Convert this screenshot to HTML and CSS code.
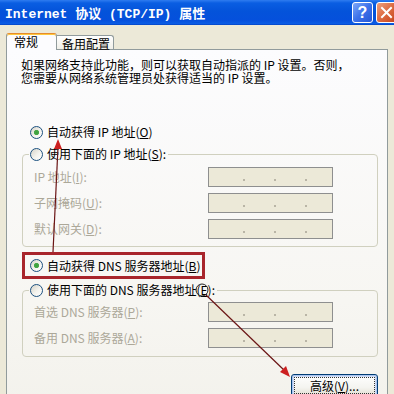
FILE: index.html
```html
<!DOCTYPE html>
<html lang="zh-CN">
<head>
<meta charset="utf-8">
<title>Internet 协议 (TCP/IP) 属性</title>
<link rel="stylesheet" href="styles.css">
</head>
<body>
<div class="window">
  <div class="titlebar">
    <span class="title">Internet 协议 (TCP/IP) 属性</span>
    <div class="caption-btns">
      <span class="cbtn help">?</span>
      <span class="cbtn close"><svg width="19" height="19" viewBox="0 0 19 19"><path d="M5 5 L14 14 M14 5 L5 14" stroke="#fff" stroke-width="2" stroke-linecap="square"/></svg></span>
    </div>
  </div>
  <div class="tabs">
    <div class="tab active">常规</div>
    <div class="tab">备用配置</div>
  </div>
  <div class="panel">
    <p class="desc">如果网络支持此功能，则可以获取自动指派的 IP 设置。否则，<br>您需要从网络系统管理员处获得适当的 IP 设置。</p>
    <div class="radio first"><span class="dot checked"></span><span>自动获得 IP 地址(<u>O</u>)</span></div>
    <fieldset class="group g-ip">
      <legend><div class="radio"><span class="dot"></span><span>使用下面的 IP 地址(<u>S</u>):</span></div></legend>
      <div class="rows">
        <span class="lbl">IP 地址(<u>I</u>):</span><span class="ip"><i></i><i></i><i></i></span>
        <span class="lbl">子网掩码(<u>U</u>):</span><span class="ip"><i></i><i></i><i></i></span>
        <span class="lbl">默认网关(<u>D</u>):</span><span class="ip"><i></i><i></i><i></i></span>
      </div>
    </fieldset>
    <div class="highlight"><div class="radio"><span class="dot checked"></span><span>自动获得 DNS 服务器地址(<u>B</u>)</span></div></div>
    <fieldset class="group g-dns">
      <legend><div class="radio"><span class="dot"></span><span>使用下面的 DNS 服务器地址(<u>E</u>):</span></div></legend>
      <div class="rows">
        <span class="lbl">首选 DNS 服务器(<u>P</u>):</span><span class="ip"><i></i><i></i><i></i></span>
        <span class="lbl">备用 DNS 服务器(<u>A</u>):</span><span class="ip"><i></i><i></i><i></i></span>
      </div>
    </fieldset>
    <div class="actions"><button class="btn">高级(<u>V</u>)...</button></div>
  </div>
  <svg class="annot" width="394" height="394" viewBox="0 0 394 394">
    <line x1="53" y1="252" x2="58" y2="147" stroke="#6b1515" stroke-width="1.2"/>
    <polygon points="58,139 54,149 62,149" fill="#cc2020"/>
    <circle cx="202" cy="290" r="6" fill="none" stroke="#222" stroke-width="1"/>
    <line x1="206" y1="295" x2="285" y2="371" stroke="#6b1515" stroke-width="1.2"/>
    <polygon points="290,377 280,372 286,366" fill="#cc2020"/>
  </svg>
</div>
</body>
</html>
```
FILE: styles.css
```css
html, body {
  margin: 0;
  padding: 0;
}
body {
  font-family: "Noto Sans CJK SC", "Liberation Sans", sans-serif;
  font-size: 12px;
  color: #000;
  background: #ece9d8;
}
.window {
  position: relative;
  width: 394px;
  height: 394px;
  overflow: hidden;
  background: #ece9d8;
}
.titlebar {
  height: 25px;
  display: flex;
  align-items: center;
  padding-left: 5px;
  background: linear-gradient(#2f7cf0 0, #0a5ee2 3px, #0453da 45%, #0550dc 80%, #0a5ce4 94%, #0343c4 100%);
}
.title {
  font-family: "Liberation Mono", "Noto Sans CJK SC", monospace;
  font-weight: bold;
  font-size: 13px;
  color: #fff;
  white-space: pre;
  letter-spacing: 0;
}
.caption-btns {
  margin-left: auto;
  margin-right: -3px;
  display: flex;
  gap: 3px;
}
.cbtn {
  box-sizing: border-box;
  width: 21px;
  height: 21px;
  border: 1px solid #fff;
  border-radius: 3px;
  display: flex;
  align-items: center;
  justify-content: center;
  color: #fff;
  font-family: "Liberation Sans", sans-serif;
  font-weight: bold;
  font-size: 16px;
}
.help {
  background: linear-gradient(135deg, #7ea8f8, #3d72ea 50%, #2457d6);
}
.close {
  background: linear-gradient(135deg, #eea07e, #dd6a40 50%, #c4441c);
}
.tabs {
  height: 24px;
  display: flex;
  align-items: flex-end;
  padding-left: 6px;
}
.tab {
  box-sizing: border-box;
  border: 1px solid #919b9c;
  border-bottom: none;
  white-space: nowrap;
}
.tab.active {
  position: relative;
  z-index: 1;
  width: 51px;
  height: 17px;
  margin-bottom: -1px;
  padding: 1px 0 0 7px;
  line-height: 14px;
  background: #fcfcfe;
  border-top-color: #e68b2c;
  border-radius: 3px 3px 0 0;
  box-shadow: inset 0 1px #ffc83c;
}
.tab:not(.active) {
  width: 57px;
  height: 14px;
  padding: 2px 0 0 5px;
  line-height: 12px;
  border-left: none;
  border-radius: 0 3px 0 0;
  background: linear-gradient(#ffffff, #f0efe8);
}
.panel {
  box-sizing: border-box;
  margin-left: 6px;
  width: 382px;
  height: 360px;
  border: 1px solid #919b9c;
  padding: 8px 0 0 15px;
  background: linear-gradient(#fcfcfe, #f7f6f2 70%, #f3f2ec);
}
.desc {
  margin: 0 0 0 -1px;
  line-height: 13px;
  white-space: nowrap;
}
.radio {
  display: flex;
  align-items: center;
  gap: 4px;
  height: 14px;
  line-height: 14px;
  white-space: nowrap;
}
.radio.first {
  margin: 41px 0 0 8px;
}
.dot {
  box-sizing: border-box;
  width: 13px;
  height: 13px;
  flex: none;
  border: 1px solid #1c5180;
  border-radius: 50%;
  background: linear-gradient(135deg, #d6d3c8, #f4f3ee 55%, #ffffff);
}
.dot.checked {
  background: radial-gradient(circle, #3d9e3d 0, #46a846 2.2px, transparent 3px), linear-gradient(135deg, #d6d3c8, #f4f3ee 55%, #ffffff);
}
.group {
  box-sizing: border-box;
  width: 356px;
  min-width: 0;
  margin: 0;
  border: 1px solid #d0d0bf;
  border-radius: 4px;
  padding: 6px 0 7px 6px;
}
.group legend {
  padding: 0 2px 0 1px;
}
.g-ip {
  margin-top: 8px;
}
.g-dns {
  margin-top: 4px;
  padding-top: 5px;
  padding-bottom: 8px;
}
.rows {
  display: grid;
  grid-template-columns: 174px 125px;
  grid-auto-rows: 20px;
  row-gap: 6px;
  align-items: center;
  padding-left: 5px;
}
.lbl {
  color: #aca899;
  white-space: nowrap;
  line-height: 14px;
}
.ip {
  box-sizing: border-box;
  height: 20px;
  border: 1px solid #8e8f8f;
  background: #ece9d8;
  display: flex;
  align-items: flex-end;
  gap: 29px;
  padding: 0 0 5px 34px;
}
.ip i {
  width: 2px;
  height: 2px;
  background: #b9b5a6;
}
.highlight {
  box-sizing: border-box;
  width: fit-content;
  margin-top: 5px;
  height: 27px;
  border: 3px solid #a8252b;
  padding: 0 2px 0 5px;
  display: flex;
  align-items: center;
}
.actions {
  width: 356px;
  margin-top: 17px;
  display: flex;
  justify-content: flex-end;
}
.btn {
  box-sizing: border-box;
  width: 87px;
  height: 23px;
  font: inherit;
  color: #000;
  border: 1px solid #003c74;
  border-radius: 3px;
  background: linear-gradient(#ffffff, #f4f4f0 60%, #e6e3d8 90%, #d6d0c5);
  box-shadow: inset 0 0 0 1px #a9c4ef, inset 0 0 0 2px #cfdcf5;
  outline: 1px dotted #333;
  outline-offset: -4px;
  padding: 0;
  line-height: 14px;
}
.annot {
  position: absolute;
  left: 0;
  top: 0;
  pointer-events: none;
}
```
